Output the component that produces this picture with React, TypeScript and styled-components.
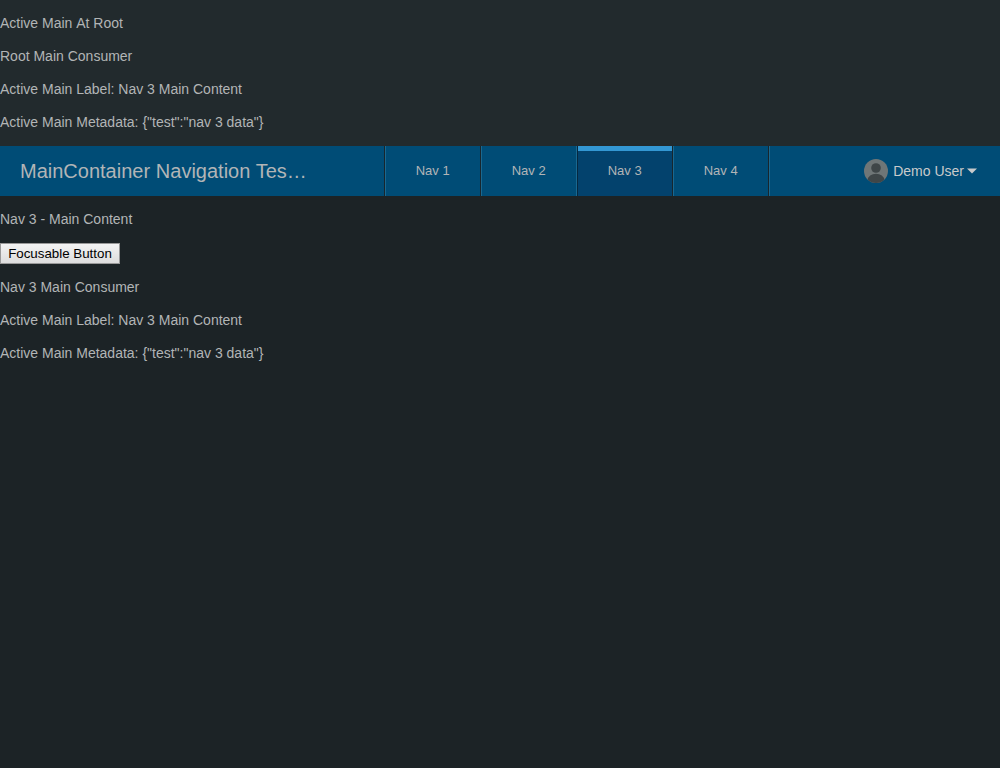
import React from 'react';
import styled, { createGlobalStyle } from 'styled-components';

const GlobalStyle = createGlobalStyle`
  html, body { margin: 0; padding: 0; }
  body {
    background: #222a2d;
    color: #b2b5b6;
    font-family: "Liberation Sans", Arial, sans-serif;
    font-size: 14px;
    line-height: normal;
  }
`;

const Page = styled.div`
  display: flex;
  flex-direction: column;
  height: 768px;
  overflow: hidden;
`;

const Info = styled.section`
  height: 146px;
  padding-top: 15px;
  box-sizing: border-box;
`;

const Line = styled.p`
  margin: 0 0 17px;
  line-height: 16px;
  font-kerning: none;
`;

const Header = styled.header`
  display: flex;
  height: 50px;
  background: #004c76;
`;

const Title = styled.div`
  box-sizing: border-box;
  width: 384px;
  padding: 0 20px;
  font-size: 20px;
  line-height: 50px;
  word-spacing: 0.2px;
  color: #b2b5b6;
`;

const Tabs = styled.nav`
  display: flex;
  padding-right: 2px;
  box-shadow: inset -1px 0 0 #1a6890, inset -2px 0 0 #18262d;
`;

const Tab = styled.div<{ $active?: boolean }>`
  box-sizing: border-box;
  width: 96px;
  height: 50px;
  padding-left: 1.4px;
  background: ${({ $active }) =>
    $active
      ? 'linear-gradient(90deg, #1a6890 1px, #06283f 1px, #06283f 2px, transparent 2px), linear-gradient(#3397d3 5px, #03426d 5px)'
      : 'linear-gradient(90deg, #18262d 1px, #1a6890 1px, #1a6890 2px, transparent 2px)'};
  line-height: 50px;
  font-size: 13px;
  text-align: center;
`;

const User = styled.div`
  display: flex;
  align-items: center;
  margin-left: auto;
  padding-right: 23px;
  color: #c8cacb;
`;

const UserName = styled.span`
  margin: 0 3px 0 5px;
`;

const Main = styled.main`
  flex: 1;
  padding-top: 15px;
  background: #1c2326;
`;

const Button = styled.button`
  display: block;
  width: 120px;
  height: 21px;
  margin: -1px 0 15px;
  padding: 0;
  border: 1px solid #999;
  background: linear-gradient(#f3f3f3, #dddddd);
  color: #000;
  font: 13.333px "Liberation Sans", Arial, sans-serif;
`;

const tabs = ['Nav 1', 'Nav 2', 'Nav 3', 'Nav 4'];

export default function App() {
  return (
    <Page>
      <GlobalStyle />
      <Info>
        <Line>Active Main At Root</Line>
        <Line>Root Main Consumer</Line>
        <Line>Active Main Label: Nav 3 Main Content</Line>
        <Line>{'Active Main Metadata: {"test":"nav 3 data"}'}</Line>
      </Info>
      <Header>
        <Title>MainContainer Navigation Tes…</Title>
        <Tabs>
          {tabs.map((t) => <Tab key={t} $active={t === 'Nav 3'}>{t}</Tab>)}
        </Tabs>
        <User>
          <svg width="24" height="24" viewBox="0 0 24 24">
            <clipPath id="avatar"><circle cx="12" cy="12" r="12" /></clipPath>
            <g clipPath="url(#avatar)">
              <rect width="24" height="24" fill="#6f7677" />
              <circle cx="12" cy="9" r="4.8" fill="#3f4648" />
              <ellipse cx="12" cy="21" rx="8.2" ry="6.2" fill="#3f4648" />
            </g>
          </svg>
          <UserName>Demo User</UserName>
          <svg width="10" height="6" viewBox="0 0 10 6"><path d="M0 .5h10L5 5.5z" fill="#c8cacb" /></svg>
        </User>
      </Header>
      <Main>
        <Line>Nav 3 - Main Content</Line>
        <Button>Focusable Button</Button>
        <Line>Nav 3 Main Consumer</Line>
        <Line>Active Main Label: Nav 3 Main Content</Line>
        <Line>{'Active Main Metadata: {"test":"nav 3 data"}'}</Line>
      </Main>
    </Page>
  );
}
